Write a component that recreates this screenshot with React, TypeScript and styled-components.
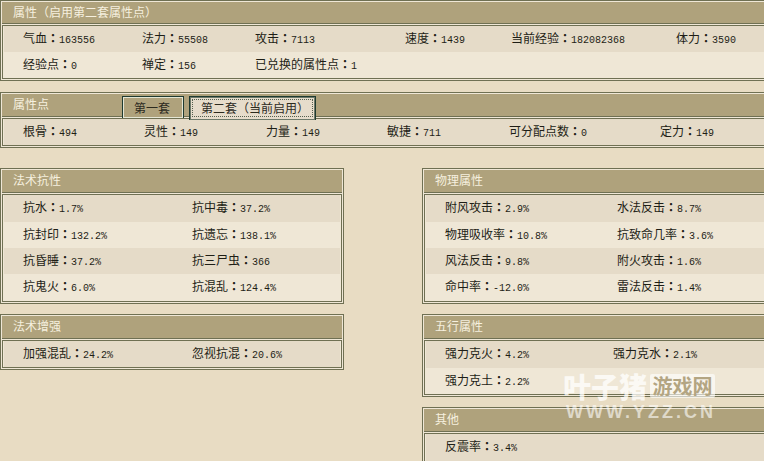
import React from "react";
import styled, { createGlobalStyle } from "styled-components";

const Global = createGlobalStyle`
  html, body { margin: 0; padding: 0; background: #e8dcc3; }
  body { width: 764px; height: 461px; overflow: hidden; font-family: "Noto Sans CJK SC", "Liberation Sans", sans-serif; font-size: 12px; color: #1c1c14; }
  #root { width: 764px; height: 461px; overflow: hidden; }
`;

const Page = styled.div`
  position: relative;
  width: 764px;
  height: 461px;
  overflow: hidden;
  background: #e8dcc3;
  box-sizing: border-box;
`;

const Panel = styled.section<{ $w?: number; $mt?: number }>`
  box-sizing: border-box;
  width: ${(p) => (p.$w ? `${p.$w}px` : "100%")};
  margin-top: ${(p) => p.$mt ?? 0}px;
  border: 1px solid #6f7053;
  padding: 1px;
  background: #efe7d6;
`;

const Header = styled.header<{ $h?: number }>`
  box-sizing: border-box;
  display: flex;
  height: ${(p) => p.$h ?? 22}px;
  background: #afa27c;
  border-bottom: 1px solid #6f7053;
  margin-bottom: 1px;
  align-items: stretch;
  position: relative;
`;

const Title = styled.h2<{ $w?: number }>`
  margin: 0;
  padding-left: 11px;
  width: ${(p) => p.$w ?? 200}px;
  flex: none;
  box-sizing: border-box;
  font: 400 12px/20px "Noto Sans CJK SC", sans-serif;
  color: #f6f0df;
  white-space: pre;
`;

const Tabs = styled.div`
  display: flex;
  gap: 5px;
  align-items: flex-start;
  padding-top: 2px;
  height: 100%;
  box-sizing: border-box;
`;

const Tab = styled.div<{ $active?: boolean; $w: number }>`
  box-sizing: border-box;
  width: ${(p) => p.$w}px;
  height: ${(p) => (p.$active ? 24 : 22)}px;
  border: 1px solid #1e3a30;
  border-bottom: none;
  background: ${(p) => (p.$active ? "#e6dccb" : "#afa27c")};
  box-shadow: inset 0 0 0 1px ${(p) => (p.$active ? "#6e7a6a" : "#e4e6d4")};
  color: #2c2a1e;
  font: 400 12px/21px "Noto Sans CJK SC", sans-serif;
  padding-left: 11px;
  white-space: pre;
  position: relative;
  z-index: 1;
  ${(p) =>
    p.$active
      ? `&::after { content: ""; position: absolute; left: 2px; right: 2px; top: 2px; bottom: 3px; border: 1px dotted #55604f; pointer-events: none; }`
      : ""}
`;

const Body = styled.div`
  border: 1px solid #6f7053;
  background: #efe7d6;
  padding: 0 1px;
`;

const Row = styled.div<{ $alt?: boolean; $cols: string; $h?: number }>`
  display: grid;
  box-sizing: border-box;
  grid-template-columns: ${(p) => p.$cols};
  height: ${(p) => p.$h ?? 26}px;
  padding-top: ${(p) => (p.$h === 27 ? 0 : 1)}px;
  align-items: center;
  background: ${(p) => (p.$alt ? "#efe7d6" : "#e5dbc8")};
`;

const Item = styled.span`
  font: 400 12px/14px "Noto Sans CJK SC", sans-serif;
  white-space: nowrap;
  color: #1e1e16;
`;

const Colon = styled.span`
  font: 700 12px/14px "Noto Sans CJK TC", sans-serif;
`;

const Val = styled.span`
  font: 400 10px/14px "Liberation Mono", monospace;
`;

const Groups = styled.div`
  display: flex;
  justify-content: space-between;
  margin-top: 20px;
`;

const Column = styled.div<{ $w: number }>`
  width: ${(p) => p.$w}px;
  display: flex;
  flex-direction: column;
  gap: 10px;
`;

const Watermark = styled.div`
  position: absolute;
  left: 563px;
  top: 370px;
  width: 160px;
  pointer-events: none;
`;

const WmTop = styled.div`
  display: flex;
  align-items: center;
  gap: 3px;
  height: 32px;
`;

const WmBig = styled.span`
  font: 900 28px/32px "Noto Sans CJK SC", sans-serif;
  color: rgba(255, 255, 255, 0.75);
`;

const WmBox = styled.span`
  background: rgba(255, 255, 255, 0.62);
  color: #b3a582;
  font: 700 20px/24px "Noto Sans CJK SC", sans-serif;
  width: 65px;
  text-align: center;
  white-space: nowrap;
  border-radius: 2px;
`;

const WmUrl = styled.div`
  font: 700 18px/16px "Liberation Sans", sans-serif;
  letter-spacing: 3px;
  padding-left: 3px;
  margin-top: 2px;
  white-space: nowrap;
  color: rgba(255, 255, 255, 0.6);
`;

type Cell = [string, string];

const colsOf = (xs: number[], left: number) =>
  `${xs[0] - left}px ${xs.map((x, i) => (i + 1 < xs.length ? `${xs[i + 1] - x}px` : "1fr")).join(" ")}`;

const Rows = ({ rows, xs, left, heights }: { rows: (Cell | null)[][]; xs: number[]; left: number; heights?: number[] }) => (
  <Body>
    {rows.map((r, i) => (
      <Row key={i} $alt={i % 2 === 1} $cols={colsOf(xs, left)} $h={heights?.[i]}>
        <span />
        {r.map((c, j) => (
          <Item key={j}>
            {c ? (
              <>
                {c[0]}
                <Colon>：</Colon>
                <Val>{c[1]}</Val>
              </>
            ) : null}
          </Item>
        ))}
      </Row>
    ))}
  </Body>
);

export default function App() {
  return (
    <Page>
      <Global />
      <Panel $w={770}>
        <Header $h={22}>
          <Title $w={300}>属性（启用第二套属性点）</Title>
        </Header>
        <Rows
          left={4}
          xs={[23, 142, 255, 405, 511, 676]}
          rows={[
            [["气血", "163556"], ["法力", "55508"], ["攻击", "7113"], ["速度", "1439"], ["当前经验", "182082368"], ["体力", "3590"]],
            [["经验点", "0"], ["禅定", "156"], ["已兑换的属性点", "1"], null, null, null],
          ]}
        />
      </Panel>
      <Panel $w={770} $mt={11}>
        <Header $h={23}>
          <Title $w={120}>属性点</Title>
          <Tabs>
            <Tab $w={62}>第一套</Tab>
            <Tab $w={127} $active>第二套（当前启用）</Tab>
          </Tabs>
        </Header>
        <Rows
          left={4}
          xs={[23, 144, 266, 387, 509, 660]}
          rows={[[["根骨", "494"], ["灵性", "149"], ["力量", "149"], ["敏捷", "711"], ["可分配点数", "0"], ["定力", "149"]]]}
        />
      </Panel>
      <Groups>
        <Column $w={344}>
          <Panel>
            <Header $h={23}>
              <Title>法术抗性</Title>
            </Header>
            <Rows
              left={4}
              xs={[23, 192]}
              heights={[27, 26, 26, 27]}
              rows={[
                [["抗水", "1.7%"], ["抗中毒", "37.2%"]],
                [["抗封印", "132.2%"], ["抗遗忘", "138.1%"]],
                [["抗昏睡", "37.2%"], ["抗三尸虫", "366"]],
                [["抗鬼火", "6.0%"], ["抗混乱", "124.4%"]],
              ]}
            />
          </Panel>
          <Panel>
            <Header $h={23}>
              <Title>法术增强</Title>
            </Header>
            <Rows left={4} xs={[23, 192]} rows={[[["加强混乱", "24.2%"], ["忽视抗混", "20.6%"]]]} />
          </Panel>
        </Column>
        <Column $w={342}>
          <Panel $w={346}>
            <Header $h={23}>
              <Title>物理属性</Title>
            </Header>
            <Rows
              left={426}
              xs={[445, 617]}
              heights={[27, 26, 26, 27]}
              rows={[
                [["附风攻击", "2.9%"], ["水法反击", "8.7%"]],
                [["物理吸收率", "10.8%"], ["抗致命几率", "3.6%"]],
                [["风法反击", "9.8%"], ["附火攻击", "1.6%"]],
                [["命中率", "-12.0%"], ["雷法反击", "1.4%"]],
              ]}
            />
          </Panel>
          <Panel $w={346}>
            <Header $h={23}>
              <Title>五行属性</Title>
            </Header>
            <Rows
              left={426}
              xs={[445, 613]}
              heights={[27, 26]}
              rows={[
                [["强力克火", "4.2%"], ["强力克水", "2.1%"]],
                [["强力克土", "2.2%"], null],
              ]}
            />
          </Panel>
          <Panel $w={346}>
            <Header $h={23}>
              <Title>其他</Title>
            </Header>
            <Rows left={426} xs={[445, 613]} heights={[27]} rows={[[["反震率", "3.4%"], null]]} />
          </Panel>
        </Column>
      </Groups>
      <Watermark>
        <WmTop>
          <WmBig>叶子猪</WmBig>
          <WmBox>游戏网</WmBox>
        </WmTop>
        <WmUrl>WWW.YZZ.CN</WmUrl>
      </Watermark>
    </Page>
  );
}
